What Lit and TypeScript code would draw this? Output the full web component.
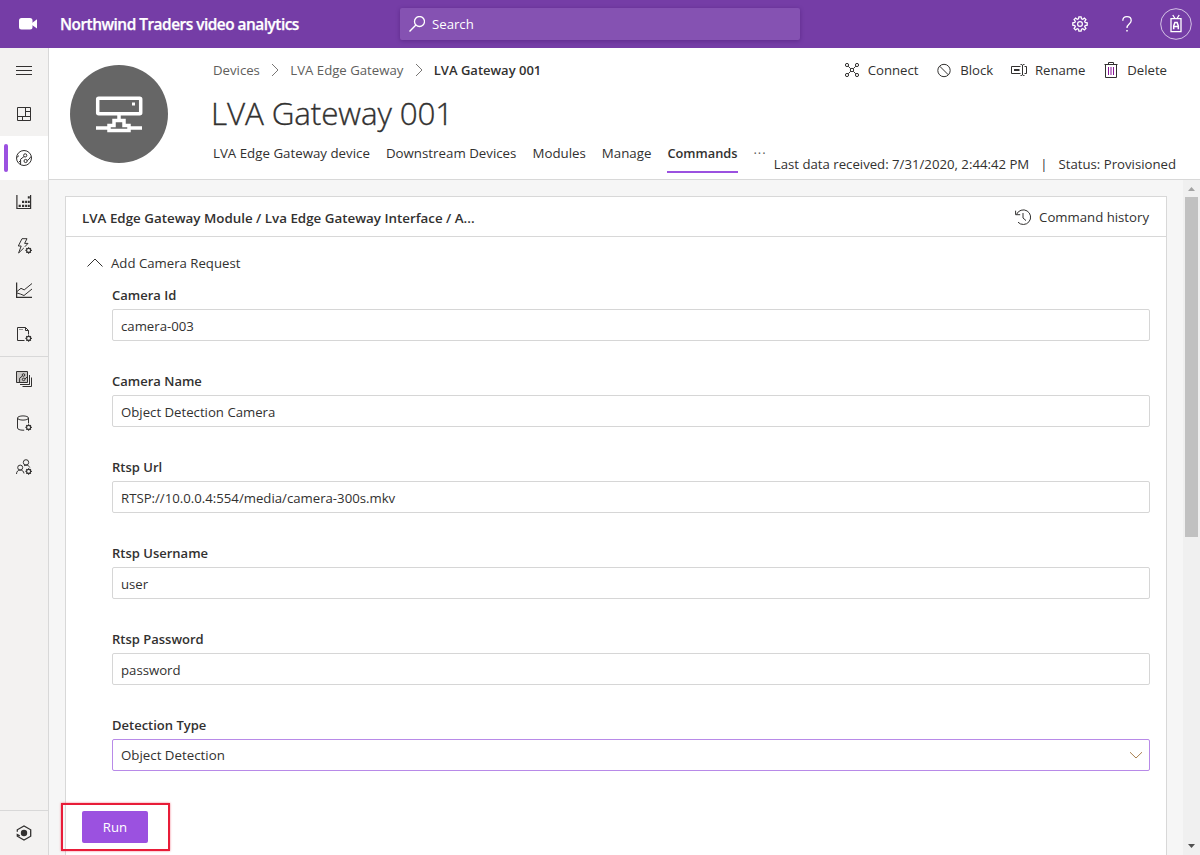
import { LitElement, html, css, svg } from "lit";
import { customElement, state } from "lit/decorators.js";
import { classMap } from "lit/directives/class-map.js";

const gearBadge = svg`<circle cx="12.6" cy="12.4" r="2" stroke-width="1.1"/><path stroke-width="1.1" d="M12.6 9.2v1.2M12.6 14.4v1.3M9.4 12.4h1.2M14.6 12.4h1.3M10.3 10.1l.9.9M14 13.8l.9.9M14.9 10.1l-.9.9M11.2 13.8l-.9.9"/>`;

const ICONS: Record<string, unknown> = {
  menu: svg`<path d="M0 4.5h16M0 8.5h16M0 12.5h16"/>`,
  dashboard: svg`<path d="M1.5 1.5h13v13h-13zM1.5 10.5h13M9.5 1.5v9M9.5 5.5h5M6.5 10.5v4"/>`,
  devices: svg`<circle cx="8" cy="8" r="7.5"/><circle cx="9.2" cy="5.4" r="1.6"/><circle cx="9.6" cy="11" r="1.6"/><path d="M8 6.6L4.6 9.2V14M11.2 10.6l1.8-1.4L15 6.5M1 7.3l2-1.7M3 12l1.5-1.5"/>`,
  groups: svg`<path stroke-width="1.2" d="M.9 1v13.5h13.700V1" /><path fill="currentColor" stroke="none" d="M2.600 10.700h2.200v2.200H2.600zM6 10.700h2.200v2.200H6zM6 6.700h2.200v2.200H6zM9.100 10.700h2v2.200h-2zM9.100 6.700h2v2.200h-2zM11.800 10.700h2v2.200h-2zM11.800 6.700h2v2.200h-2zM11.800 2.200h2v2.200h-2z"/>`,
  rules: svg`<path d="M6 .7h5L8.6 5.4h3.4L8.8 8.8M6 .7L2.3 8h2.9L2.6 15l5.2-5"/>${gearBadge}`,
  analytics: svg`<path stroke-width="1.3" d="M.6 .5v15H16"/><path d="M1 9.5l4-3.2 3.2 1.6L16 1.500M1 11l3.300 1 3.700 1.500L16 7"/>`,
  jobs: svg`<path d="M8.5 14.5h-7V1.500h8l3 3v4M9.500 1.500v3h3"/><path stroke-dasharray="1 1" d="M3.500 3.500h4"/>${gearBadge}`,
  templates: svg`<path fill="#c8c6c4" d="M.5.5h11v11H.5z"/><circle cx="7.5" cy="4" r="1.3"/><circle cx="7.6" cy="8.4" r="1.3"/><path d="M6.4 5L3.6 7.2V11M9 8l2-2M4 13.5h9.5V4M6.5 15.5h9V6.5M11.5 13.5h2"/>`,
  exporting: svg`<ellipse cx="7" cy="3" rx="5.5" ry="2.1"/><path d="M1.5 3v10c0 1.2 2.4 2.2 5.5 2.2h1.2M12.5 3v5.4"/>${gearBadge}`,
  admin: svg`<circle cx="10" cy="3.4" r="2.7"/><circle cx="4.2" cy="8.6" r="2.5"/><path d="M.5 15c0-2.5 1.6-4 3.7-4s3.4 1.3 3.8 3.4M8 6.9c.6-.5 1.2-.8 2-.8 1.8 0 3.2.9 3.8 2.4"/>${gearBadge}`,
  home: svg`<circle cx="8" cy="8" r="3.2" fill="currentColor" stroke="none"/><path stroke-width="1.3" d="M1.3 6.7V4.8L8 1l6.7 3.8v6.4L8 15l-6.7-3.8V9.6l2.5 1.2"/>`,
  connect: svg`<circle cx="3" cy="3" r="1.6"/><circle cx="13" cy="3" r="1.6"/><circle cx="3" cy="13" r="1.6"/><circle cx="13" cy="13" r="1.6"/><circle cx="8" cy="8" r="1.7"/><path d="M4.2 4.2l2.6 2.6M11.8 4.2L9.2 6.8M4.2 11.8l2.6-2.6M11.8 11.8L9.2 9.2"/>`,
  block: svg`<circle cx="8" cy="8.5" r="6.2"/><path d="M3.7 4.2l8.6 8.6"/>`,
  rename: svg`<path d="M9.500 4.500h-9v7h9M13.500 4.500h2v7h-2M9.500 2.500h1.300l.7.800.7-.8h1.300M9.500 13.500h1.300l.7-.8.7.8h1.300M11.500 3v10"/><path stroke-width="2" d="M3 8h5.500"/>`,
  remove: svg`<path d="M1.500 2.500h13M5.500 2.500v-2h5v2M2.500 2.500v13h11v-13"/><path stroke="#881798" d="M5.500 5v8M8 5v8M10.500 5v8"/>`,
  history: svg`<path d="M1.6 5.3A7.3 7.3 0 1 1 3 13.2M.6 1.7v4h4.6M8 4v5l3 2.6"/>`,
  find: svg`<circle cx="10.500" cy="5.500" r="5" stroke-width="1.300"/><path stroke-width="1.400" d="M6.900 9.100L.5 15.500"/>`,
  settings: svg`<circle cx="8" cy="8" r="2.4" stroke-width="1.2"/><path stroke-width="1.3" d="M6.9.8h2.2l.4 2 1.2.5 1.7-1.2 1.5 1.5-1.2 1.7.5 1.2 2 .4v2.2l-2 .4-.5 1.2 1.2 1.7-1.5 1.5-1.7-1.2-1.2.5-.4 2H6.900l-.4-2-1.200-.5-1.700 1.200-1.500-1.500 1.200-1.700-.5-1.200-2-.4V6.900l2-.4.5-1.200-1.200-1.700 1.500-1.500 1.700 1.200 1.200-.5z"/>`,
  help: svg`<path stroke-width="1.300" d="M3.800 4.800C3.800 2.400 5.500.7 8 .7s4.200 1.500 4.200 3.800c0 3.500-4.200 3.400-4.200 7.200v.4"/><path stroke-width="1.500" d="M8 14v1.600"/>`,
  right: svg`<path d="M5 2l6 6-6 6"/>`,
  up: svg`<path d="M.5 11.500L8 4l7.500 7.500"/>`,
  down: svg`<path d="M2 5.200L8 11l6-5.800"/>`,
};

const icon = (name: string) =>
  html`<svg class="icon ${name}" width="16" height="16" viewBox="0 0 16 16" fill="none" stroke="currentColor">${ICONS[name]}</svg>`;

const FIELDS = [
  ["Camera Id", "camera-003"],
  ["Camera Name", "Object Detection Camera"],
  ["Rtsp Url", "RTSP://10.0.0.4:554/media/camera-300s.mkv"],
  ["Rtsp Username", "user"],
  ["Rtsp Password", "password"],
];

@customElement("app-root")
export class AppRoot extends LitElement {
  @state() private tab = "Commands";

  static styles = css`
    * { box-sizing: border-box; }
    :host {
      display: flex; flex-direction: column; width: 100%; height: 100vh; overflow: hidden;
      font: 13.2px/20px "Open Sans", "Noto Sans", sans-serif; color: #323130; background: #fff;
    }
    .icon { display: block; flex: none; }
    .strong { font-weight: 600; font-size: 13px; }

    .topbar { flex: none; height: 48px; background: #753da6; color: #fff; display: flex; align-items: center; padding-right: 8px; }
    .brand-icon { display: block; width: 18px; margin: 0 23px 0 19px; }
    .brand { width: 340px; font-weight: 600; font-size: 15.4px; letter-spacing: -0.49px; padding-top: 1px; white-space: nowrap; -webkit-text-stroke: .25px #fff; }
    .search { width: 400px; height: 32px; border-radius: 2px; background: #8552b2; box-shadow: 0 1px 4px rgba(50, 10, 90, .35);
      display: flex; align-items: center; gap: 7px; padding-left: 9px; }
    .tools { margin-left: auto; display: flex; align-items: center; }
    .tools .settings { margin-right: 31px; }
    .tools .help { margin-right: 25px; }
    .avatar { display: block; }

    .shell { flex: 1; min-height: 0; display: flex; }
    .rail { flex: none; width: 49px; background: #f3f2f1; border-right: 1px solid #d8d8d8; display: flex; flex-direction: column; }
    .rail-item { height: 44px; display: flex; align-items: center; justify-content: center; }
    .rail-item.selected { background: #fff; justify-content: flex-start; gap: 8px; padding: 0 4px; }
    .marker { width: 4px; height: 28px; border-radius: 2px; background: #9b51e0; }
    .rail-group { border-bottom: 1px solid #d8d8d8; }
    .rail-foot { margin-top: auto; border-top: 1px solid #d8d8d8; height: 45px; }

    .main { flex: 1; min-width: 0; display: flex; flex-direction: column; }
    .head { flex: none; height: 132px; border-bottom: 1px solid #d8d8d8; display: flex; padding: 12px 24px 0 21px; }
    .device { flex: none; width: 98px; height: 98px; margin-top: 5px; border-radius: 50%; background: #666; display: flex; align-items: center; justify-content: center; }
    .info { flex: 1; margin-left: 45px; min-width: 0; white-space: nowrap; }
    .row { display: flex; align-items: center; height: 20px; }
    .crumb { color: #605e5c; }
    .row .right { margin: 0 7px 0 7.400px; color: #797775; }
    .actions { margin-left: auto; display: flex; gap: 17.700px; padding-right: 9px; }
    .action { display: flex; align-items: center; gap: 8px; }
    h1 { margin: 11px 0 9px -2px; height: 44px; font: 300 31.4px/44px "Open Sans", "Noto Sans", sans-serif; letter-spacing: -0.12px; -webkit-text-stroke: .35px #323130; }
    .bottom { display: flex; align-items: flex-start; height: 32px; }
    .tabs { display: flex; gap: 16px; font-size: 13.300px; margin-top: -4px; }
    .tab { height: 33px; padding-top: 3px; border-bottom: 2px solid transparent; }
    .tab.current { border-color: #9b51e0; font-weight: 600; font-size: 12.800px; }
    .tab.more { color: #605e5c; font-size: 13px; letter-spacing: .9px; }
    .status { margin-left: auto; display: flex; gap: 11px; padding-top: 10px; }

    .body { flex: 1; min-height: 0; display: flex; background: #f6f6f6; }
    .scroll { flex: 1; min-width: 0; padding: 16px 16px 0; overflow: hidden; }
    .card { height: 800px; background: #fff; border: 1px solid #d8d8d8; }
    .card-head { height: 40px; border-bottom: 1px solid #d8d8d8; display: flex; align-items: center; justify-content: space-between; padding: 2px 17px 0 16px; }
    .path { font-weight: 600; font-size: 13.360px; }
    .history-link { display: flex; align-items: center; gap: 8px; padding-bottom: 2px; }
    .form { padding: 16px 16px 0 21px; }
    .group { display: flex; align-items: center; gap: 8px; height: 20px; }
    .fields { padding: 12px 0 0 25px; }
    .field { height: 86px; }
    .box { margin-top: 4px; height: 32px; border: 1px solid #d6d6d6; border-radius: 2px; padding: 1px 8px 0; display: flex; align-items: center; }
    .box.select { border-color: #b88ae8; justify-content: space-between; padding: 0 5px 0 8px; font-size: 13.300px; }
    .box .down { color: #a8804f; }
    .foot { margin: 2px 0 0 -5px; position: relative; }
    .callout { width: 109px; height: 48px; border: 2px solid #e81c38; box-shadow: 0 0 2px rgba(232, 28, 56, .6); padding: 6px 19px; }
    .run { display: block; width: 66px; height: 32px; border: 0; border-radius: 2px; background: #9b51e0; color: #fff; font: 13.200px/32px "Open Sans", "Noto Sans", sans-serif; padding: 0; }

    .scrollbar { flex: none; width: 17px; background: #f0f0f0; display: flex; flex-direction: column; align-items: center; padding: 7px 2px; }
    .thumb { width: 13px; height: 340px; background: #c1c1c1; margin-top: 6px; }
    .scrollbar .last { margin-top: auto; }
  `;

  private rail(name: string, selected = false) {
    return html`<div class=${classMap({ "rail-item": true, selected })}>
      ${selected ? html`<span class="marker"></span>` : ""}${icon(name)}
    </div>`;
  }

  render() {
    return html`
      <header class="topbar">
        <svg class="brand-icon" width="18" height="12" viewBox="0 0 18 12" fill="#fff"><rect width="13.500" height="11.500" rx="2.500"/><path d="M13 5l5-3.800v9.300L13 7z"/></svg>
        <div class="brand">Northwind Traders video analytics</div>
        <div class="search">${icon("find")}<span>Search</span></div>
        <div class="tools">
          ${icon("settings")}${icon("help")}
          <svg class="avatar" width="32" height="32" viewBox="0 0 32 32" fill="none" stroke="#fff">
            <circle cx="16" cy="16" r="15.300" stroke="#d5c3e6"/>
            <path stroke-width="1.300" d="M11 10.700h10v13H11zM12.800 7l2.200 3.500M19.200 7L17 10.500"/>
            <path stroke-width="1.500" d="M13.700 21.300v-3.500l1.200-3.300h2.200l1.200 3.300v3.500M13.700 18.500h4.600"/>
          </svg>
        </div>
      </header>
      <div class="shell">
        <nav class="rail">
          <div class="rail-group">
            ${this.rail("menu")}${this.rail("dashboard")}${this.rail("devices", true)}${this.rail("groups")}
            ${this.rail("rules")}${this.rail("analytics")}${this.rail("jobs")}
          </div>
          ${this.rail("templates")}${this.rail("exporting")}${this.rail("admin")}
          <div class="rail-foot">${this.rail("home")}</div>
        </nav>
        <main class="main">
          <section class="head">
            <div class="device">
              <svg width="48" height="38" viewBox="0 0 48 38" fill="none" stroke="#fff" stroke-width="3.500">
                <rect x="2.700" y="3.200" width="43" height="15.600" rx="1"/><path d="M24 18.500v6M1 33h12M35 33h12M14 35.500h20v-5h-5v-5H19v5h-5z"/><path stroke-width="3" d="M37 9h3"/>
              </svg>
            </div>
            <div class="info">
              <div class="row">
                <span class="crumb">Devices</span>${icon("right")}<span class="crumb">LVA Edge Gateway</span>${icon("right")}<span class="strong">LVA Gateway 001</span>
                <div class="actions">
                  ${[["connect", "Connect"], ["block", "Block"], ["rename", "Rename"], ["remove", "Delete"]].map(
                    ([i, label]) => html`<span class="action">${icon(i)}${label}</span>`)}
                </div>
              </div>
              <h1>LVA Gateway 001</h1>
              <div class="bottom">
                <div class="tabs">
                  ${["LVA Edge Gateway device", "Downstream Devices", "Modules", "Manage", "Commands"].map(
                    (t) => html`<span class=${classMap({ tab: true, current: t === this.tab })} @click=${() => (this.tab = t)}>${t}</span>`)}
                  <span class="tab more">···</span>
                </div>
                <div class="status"><span>Last data received: 7/31/2020, 2:44:42 PM</span><span>|</span><span>Status: Provisioned</span></div>
              </div>
            </div>
          </section>
          <section class="body">
            <div class="scroll">
              <div class="card">
                <div class="card-head">
                  <span class="path">LVA Edge Gateway Module / Lva Edge Gateway Interface / A...</span>
                  <span class="history-link">${icon("history")}Command history</span>
                </div>
                <div class="form">
                  <div class="group">${icon("up")}<span>Add Camera Request</span></div>
                  <div class="fields">
                    ${FIELDS.map(([label, value]) => html`<div class="field"><div class="strong">${label}</div><div class="box">${value}</div></div>`)}
                    <div class="field"><div class="strong">Detection Type</div><div class="box select"><span>Object Detection</span>${icon("down")}</div></div>
                  </div>
                </div>
                <div class="foot"><div class="callout"><button class="run">Run</button></div></div>
              </div>
            </div>
            <div class="scrollbar">
              <svg width="7" height="4" viewBox="0 0 7 4" fill="#a3a3a3"><path d="M0 4L3.500 0 7 4z"/></svg>
              <div class="thumb"></div>
              <svg class="last" width="7" height="4" viewBox="0 0 7 4" fill="#505050"><path d="M0 0h7L3.500 4z"/></svg>
            </div>
          </section>
        </main>
      </div>`;
  }
}
